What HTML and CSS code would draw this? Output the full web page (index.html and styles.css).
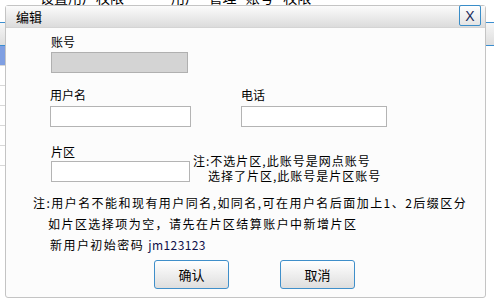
FILE: index.html
```html
<!DOCTYPE html>
<html lang="zh-CN">
<head>
  <meta charset="UTF-8">
  <title>编辑</title>
  <link rel="stylesheet" href="styles.css">
</head>
<body>
  <div class="page">
    <div class="page-title">设置用户权限 &nbsp; &nbsp; &nbsp; &nbsp; &nbsp; &nbsp; &nbsp; 用户 &nbsp; 管理 &nbsp; 账号 &nbsp; 权限</div>
    <div class="grid">
      <div class="grid-head"></div>
      <div class="grid-row selected"></div>
      <div class="grid-row"></div>
      <div class="grid-row"></div>
      <div class="grid-row"></div>
      <div class="grid-row"></div>
      <div class="grid-row"></div>
    </div>
  </div>

  <div class="dialog">
    <div class="dialog-title">
      <span>编辑</span>
      <button class="close">X</button>
    </div>
    <div class="dialog-body">
      <div class="field">
        <label>账号</label>
        <input class="input disabled" type="text" disabled>
      </div>

      <div class="row two">
        <div class="field">
          <label>用户名</label>
          <input class="input name" type="text">
        </div>
        <div class="field">
          <label>电话</label>
          <input class="input phone" type="text">
        </div>
      </div>

      <div class="row area">
        <div class="field">
          <label>片区</label>
          <input class="input area-input" type="text">
        </div>
        <div class="area-note">
          <div>注:不选片区,此账号是网点账号</div>
          <div class="indent">选择了片区,此账号是片区账号</div>
        </div>
      </div>

      <div class="notes">
        <div class="note-first">注:用户名不能和现有用户同名,如同名,可在用户名后面加上1、2后缀区分</div>
        <div class="note-second">如片区选择项为空，请先在片区结算账户中新增片区</div>
        <div class="note-third">新用户初始密码 <span class="pwd">jm123123</span></div>
      </div>

      <div class="actions">
        <button class="btn">确认</button>
        <button class="btn">取消</button>
      </div>
    </div>
  </div>
</body>
</html>
```

FILE: styles.css
```css
body {
  margin: 0;
  font-family: "Noto Sans CJK SC", "Liberation Sans", sans-serif;
  font-size: 12px;
  color: #000;
  background: #fff;
  overflow: hidden;
}
.page {
  height: 299px;
}
.page-title {
  margin-top: -13px;
  padding-left: 40px;
  height: 35px;
  line-height: 20px;
  font-size: 14px;
}
.grid {
  border-top: 1px solid #3b8ed0;
}
.grid-head {
  height: 22px;
  background: linear-gradient(#f6f6f6, #dedede);
  border-bottom: 1px solid #3b8ed0;
}
.grid-row {
  width: 120px;
  height: 19px;
  border-bottom: 1px solid #d8d8d8;
}
.grid-row.selected {
  background: #7f9fe2;
}

.dialog {
  position: absolute;
  left: 5px;
  top: 5px;
  width: 479px;
  height: 291px;
  border: 1px solid #c4c4c4;
  border-radius: 3px;
  background: #fcfcfc;
}
.dialog-title {
  height: 21px;
  border-bottom: 1px solid #d4d4d4;
  background: linear-gradient(#fbfbfb, #dcdcdc);
  display: flex;
  align-items: center;
  justify-content: space-between;
  padding-left: 10px;
  font-size: 13px;
  line-height: 21px;
}
.close {
  align-self: flex-start;
  margin-top: -1px;
  margin-right: 4px;
  width: 22px;
  height: 21px;
  padding: 0;
  border: 1px solid #3a8dc8;
  border-radius: 2px;
  background: linear-gradient(#ffffff, #e4e4e4);
  font-family: "Liberation Sans", sans-serif;
  font-size: 14px;
  color: #1a2a5a;
  line-height: 18px;
}
.dialog-body {
  padding: 6px 0 0 45px;
}
.field label {
  display: block;
  height: 15px;
  line-height: 15px;
  margin-bottom: 3px;
}
.input {
  display: block;
  box-sizing: border-box;
  height: 21px;
  margin: 0;
  border: 1px solid #b4b4b4;
  background: #fff;
}
.input.disabled {
  width: 137px;
  background: #d4d4d4;
  border-color: #b0b0b0;
}
.row.two {
  display: flex;
  gap: 50px;
  margin-top: 14px;
  margin-left: -1px;
}
.row.two label {
  margin-bottom: 4px;
}
.input.name {
  width: 141px;
}
.input.phone {
  width: 146px;
}
.row.area {
  display: flex;
  align-items: flex-end;
  margin-top: 17px;
}
.row.area label {
  margin-bottom: 2px;
}
.input.area-input {
  width: 139px;
}
.area-note {
  margin-left: 3px;
  margin-bottom: -1px;
  line-height: 15px;
  letter-spacing: 1px;
}
.area-note .indent {
  padding-left: 15px;
}
.notes {
  margin-left: -18px;
  margin-top: 10px;
  letter-spacing: 1.45px;
  line-height: 21px;
}
.note-second {
  padding-left: 15px;
}
.note-third {
  padding-left: 17px;
}
.pwd {
  letter-spacing: 0.4px;
  color: #10104a;
}
.actions {
  display: flex;
  gap: 51px;
  padding-left: 103px;
  margin-top: 5px;
}
.btn {
  width: 75px;
  height: 29px;
  padding: 0;
  border: 1px solid #3f8fca;
  border-radius: 3px;
  background: linear-gradient(#ffffff, #dedede);
  font-family: "Noto Sans CJK SC", sans-serif;
  font-size: 13px;
  color: #000;
}
```
